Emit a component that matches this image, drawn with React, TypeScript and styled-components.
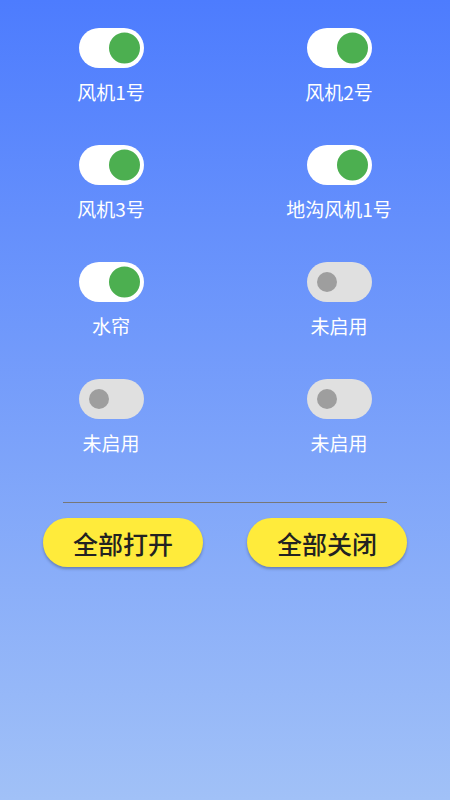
import styled, { createGlobalStyle } from 'styled-components';
import { useState } from 'react';

const GlobalStyle = createGlobalStyle`
  html, body {
    margin: 0;
    padding: 0;
  }
  body {
    font-family: "Noto Sans CJK SC", "Noto Sans", sans-serif;
  }
`;

interface Fan {
  name: string;
  on: boolean;
  enabled: boolean;
}

const initialFans: Fan[] = [
  { name: '风机1号', on: true, enabled: true },
  { name: '风机2号', on: true, enabled: true },
  { name: '风机3号', on: true, enabled: true },
  { name: '地沟风机1号', on: true, enabled: true },
  { name: '水帘', on: true, enabled: true },
  { name: '未启用', on: false, enabled: false },
  { name: '未启用', on: false, enabled: false },
  { name: '未启用', on: false, enabled: false },
];

const App = () => {
  const [fans, setFans] = useState(initialFans);

  const toggle = (i: number) =>
    setFans(list => list.map((f, j) => (j === i && f.enabled ? { ...f, on: !f.on } : f)));

  const setAll = (on: boolean) =>
    setFans(list => list.map(f => (f.enabled ? { ...f, on } : f)));

  return (
    <Page>
      <GlobalStyle />
      <Grid>
        {fans.map((fan, i) => (
          <Cell key={i}>
            <Track $on={fan.on} onClick={() => toggle(i)}>
              <Thumb $on={fan.on} />
            </Track>
            <Label>{fan.name}</Label>
          </Cell>
        ))}
      </Grid>
      <Divider />
      <Actions>
        <ActionButton onClick={() => setAll(true)}>全部打开</ActionButton>
        <ActionButton onClick={() => setAll(false)}>全部关闭</ActionButton>
      </Actions>
    </Page>
  );
};

const Page = styled.div`
  width: 450px;
  height: 800px;
  box-sizing: border-box;
  padding-top: 28px;
  background: linear-gradient(180deg, #4d7cfe 0%, #a1c1f7 100%);
  display: flex;
  flex-direction: column;
  align-items: center;
  overflow: hidden;
`;

const Grid = styled.div`
  width: 100%;
  display: grid;
  grid-template-columns: 222px 222px;
  column-gap: 6px;
  row-gap: 41px;
`;

const Cell = styled.div`
  display: flex;
  flex-direction: column;
  align-items: center;
  gap: 12px;
`;

const Track = styled.div<{ $on: boolean }>`
  position: relative;
  width: 65px;
  height: 40px;
  border-radius: 20px;
  background: ${p => (p.$on ? '#ffffff' : '#e0e0e0')};
  cursor: pointer;
`;

const Thumb = styled.span<{ $on: boolean }>`
  position: absolute;
  top: 50%;
  transform: translateY(-50%);
  border-radius: 50%;
  ${p =>
    p.$on
      ? `width: 31px; height: 31px; right: 4px; background: #4caf50;`
      : `width: 20px; height: 20px; left: 10px; background: #9e9e9e;`}
`;

const Label = styled.div`
  font-size: 19px;
  line-height: 24px;
  color: #ffffff;
  white-space: nowrap;
`;

const Divider = styled.div`
  width: 324px;
  height: 1px;
  margin-top: 47px;
  background: #777777;
`;

const Actions = styled.div`
  display: flex;
  gap: 44px;
  margin-top: 15px;
`;

const ActionButton = styled.button`
  width: 160px;
  height: 49px;
  border: none;
  border-radius: 25px;
  background: #ffeb3b;
  color: #222222;
  font-family: "Noto Sans CJK SC", "Noto Sans", sans-serif;
  font-size: 25px;
  font-weight: 500;
  box-shadow: 0 2px 3px rgba(0, 0, 0, 0.25);
  cursor: pointer;
`;

export default App;
